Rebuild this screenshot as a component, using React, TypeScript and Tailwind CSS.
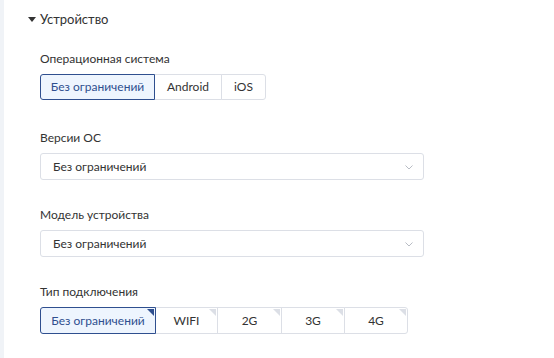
import { useState } from "react";

const OS_OPTIONS = ["Без ограничений", "Android", "iOS"];
const NET_OPTIONS = ["Без ограничений", "WIFI", "2G", "3G", "4G"];
const NET_WIDTHS = ["w-[116px]", "w-[63px]", "w-[65px]", "w-[64px]", "w-[64px]"];

function Chevron() {
  return (
    <svg viewBox="0 0 12 12" className="h-[12px] w-[12px]" fill="none" stroke="#b8bcc4" strokeWidth="1" aria-hidden="true">
      <path d="M2.5 4.5 6 8l3.5-3.5" />
    </svg>
  );
}

function SelectBox({ value }: { value: string }) {
  return (
    <div className="flex h-[27px] w-[384px] items-center justify-between rounded-[3px] border border-[#dcdfe6] bg-white pl-[12px] pr-[8px] text-[12px] text-[#333]">
      <span>{value}</span>
      <Chevron />
    </div>
  );
}

export default function App() {
  const [os, setOs] = useState(0);
  const [net, setNet] = useState(0);

  return (
    <div
      className="flex h-[358px] w-[554px] bg-white text-[#333]"
      style={{ fontFamily: 'Lato, "Noto Sans", sans-serif' }}
    >
      <div className="w-[4px] bg-[#f0f3f7]" />
      <div className="flex flex-1 flex-col pl-[24px]">
        <div className="mt-[10px] flex h-[18px] items-center gap-[4px]">
          <span className="h-0 w-0 border-x-[4px] border-t-[5px] border-x-transparent border-t-[#333]" />
          <span className="text-[13px] leading-[18px]">Устройство</span>
        </div>

        <div className="flex flex-col pl-[12px]">
          <div className="mt-[22px] text-[12px] leading-[18px]">Операционная система</div>
          <div className="mt-[6px] flex h-[26px]">
            {OS_OPTIONS.map((o, i) => {
              const active = os === i;
              return (
                <button
                  key={o}
                  type="button"
                  onClick={() => setOs(i)}
                  className={
                    "flex items-center justify-center border text-[12px] " +
                    (i === 0 ? "w-[115px] rounded-l-[3px] " : i === 1 ? "w-[68px] -ml-px " : "w-[45px] -ml-px rounded-r-[3px] ") +
                    (active
                      ? "relative z-10 border-[#2f4f8f] bg-[#eef5fe] text-[#2f4f8f]"
                      : "border-[#dcdfe6] bg-white text-[#333]")
                  }
                >
                  {o}
                </button>
              );
            })}
          </div>

          <div className="mt-[29px] text-[12px] leading-[18px]">Версии ОС</div>
          <div className="mt-[6px]">
            <SelectBox value="Без ограничений" />
          </div>

          <div className="mt-[26px] text-[12px] leading-[18px]">Модель устройства</div>
          <div className="mt-[6px]">
            <SelectBox value="Без ограничений" />
          </div>

          <div className="mt-[26px] text-[12px] leading-[18px]">Тип подключения</div>
          <div className="mt-[6px] flex h-[27px]">
            {NET_OPTIONS.map((o, i) => {
              const active = net === i;
              return (
                <button
                  key={o}
                  type="button"
                  onClick={() => setNet(i)}
                  className={
                    "relative flex items-center justify-center border text-[12px] " +
                    NET_WIDTHS[i] +
                    (i === 0 ? " rounded-l-[3px]" : " -ml-px") +
                    (i === NET_OPTIONS.length - 1 ? " rounded-r-[3px]" : "") +
                    (active
                      ? " z-10 border-[#2f4f8f] bg-[#eef5fe] text-[#2f4f8f]"
                      : " border-[#dcdfe6] bg-white text-[#333]")
                  }
                >
                  {o}
                  <span
                    className={
                      "absolute right-[1px] top-[1px] h-0 w-0 border-l-[7px] border-t-[7px] border-l-transparent " +
                      (active ? "border-t-[#2f4f8f]" : "border-t-[#dcdfe6]")
                    }
                  />
                </button>
              );
            })}
          </div>
        </div>
      </div>
    </div>
  );
}
